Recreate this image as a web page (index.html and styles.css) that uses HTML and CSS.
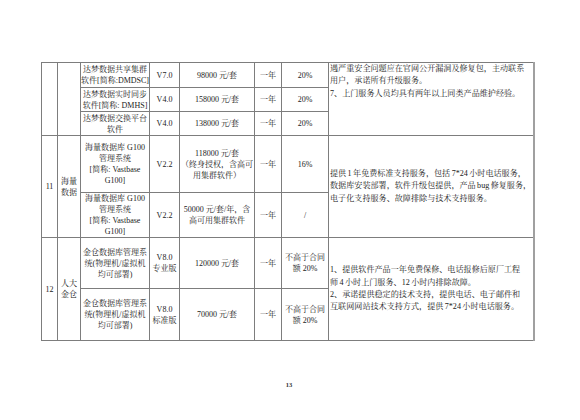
FILE: index.html
```html
<!DOCTYPE html>
<html lang="zh">
<head>
<meta charset="utf-8">
<link rel="stylesheet" href="styles.css">
</head>
<body>
<div class="page">
  <table class="grid">
    <colgroup>
      <col class="c1"><col class="c2"><col class="c3"><col class="c4"><col class="c5"><col class="c6"><col class="c7"><col class="c8">
    </colgroup>
    <tr class="r1">
      <td rowspan="3"></td>
      <td rowspan="3"></td>
      <td>达梦数据共享集群<br>软件[简称:DMDSC]</td>
      <td>V7.0</td>
      <td>98000 元/套</td>
      <td>一年</td>
      <td>20%</td>
      <td rowspan="3" class="desc top">遇严重安全问题应在官网公开漏洞及修复包，主动联系<br>用户，承诺所有升级服务。<br>7、上门服务人员均具有两年以上同类产品维护经验。</td>
    </tr>
    <tr class="r2">
      <td>达梦数据实时同步<br>软件[简称: DMHS]</td>
      <td>V4.0</td>
      <td>158000 元/套</td>
      <td>一年</td>
      <td>20%</td>
    </tr>
    <tr class="r3">
      <td>达梦数据交换平台<br>软件</td>
      <td>V4.0</td>
      <td>138000 元/套</td>
      <td>一年</td>
      <td>20%</td>
    </tr>
    <tr class="r4">
      <td rowspan="2">11</td>
      <td rowspan="2">海量<br>数据</td>
      <td>海量数据库 G100<br>管理系统<br>[简称: Vastbase<br>G100]</td>
      <td>V2.2</td>
      <td>118000 元/套<br>（终身授权，含高可<br>用集群软件）</td>
      <td>一年</td>
      <td>16%</td>
      <td rowspan="2" class="desc">提供 1 年免费标准支持服务，包括 7*24 小时电话服务，<br>数据库安装部署，软件升级包提供，产品 bug 修复服务，<br>电子化支持服务、故障排除与技术支持服务。</td>
    </tr>
    <tr class="r5">
      <td>海量数据库 G100<br>管理系统<br>[简称: Vastbase<br>G100]</td>
      <td>V2.2</td>
      <td>50000 元/套/年，含<br>高可用集群软件</td>
      <td>一年</td>
      <td>/</td>
    </tr>
    <tr class="r6">
      <td rowspan="2">12</td>
      <td rowspan="2">人大<br>金仓</td>
      <td>金仓数据库管理系<br>统(物理机/虚拟机<br>均可部署)</td>
      <td>V8.0<br>专业版</td>
      <td>120000 元/套</td>
      <td>一年</td>
      <td>不高于合同<br>额 20%</td>
      <td rowspan="2" class="desc">1、提供软件产品一年免费保修、电话报修后原厂工程<br>师 4 小时上门服务、12 小时内排除故障。<br>2、承诺提供稳定的技术支持，提供电话、电子邮件和<br>互联网网站技术支持方式，提供 7*24 小时电话服务。</td>
    </tr>
    <tr class="r7">
      <td>金仓数据库管理系<br>统(物理机/虚拟机<br>均可部署)</td>
      <td>V8.0<br>标准版</td>
      <td>70000 元/套</td>
      <td>一年</td>
      <td>不高于合同<br>额 20%</td>
    </tr>
  </table>
  <div class="pagenum">13</div>
</div>
</body>
</html>
```

FILE: styles.css
```css
html, body {
  margin: 0;
  padding: 0;
  background: #ffffff;
}

.page {
  width: 580px;
  height: 420px;
  padding-top: 62px;
  padding-left: 41px;
  box-sizing: border-box;
  font-family: "Liberation Serif", "Noto Serif CJK SC", "Noto Sans CJK SC", serif;
  color: #222222;
}

.grid {
  border-collapse: collapse;
  table-layout: fixed;
  width: 492px;
  font-size: 8px;
  line-height: 11px;
}

.grid td {
  border: 1px solid #7d7d7d;
  padding: 0;
  text-align: center;
  vertical-align: middle;
  overflow: hidden;
  white-space: nowrap;
}

.c1 { width: 16px; }
.c2 { width: 23px; }
.c3 { width: 69px; }
.c4 { width: 30px; }
.c5 { width: 75px; }
.c6 { width: 27px; }
.c7 { width: 47px; }
.c8 { width: 205px; }

.r1 { height: 25px; }
.r2 { height: 24px; }
.r3 { height: 24px; }
.r4 { height: 57px; }
.r5 { height: 44px; }
.r6 { height: 51px; }
.r7 { height: 52px; }

.grid td.desc {
  text-align: left;
  font-size: 8.1px;
  line-height: 12.4px;
  word-spacing: -0.6px;
  padding-left: 1px;
  border-right: 2px solid #a0a0a0;
}

.grid td.top {
  vertical-align: top;
}

.pagenum {
  width: 496px;
  margin-top: 40px;
  text-align: center;
  font-size: 6.5px;
  font-weight: bold;
  color: #333;
}
```
